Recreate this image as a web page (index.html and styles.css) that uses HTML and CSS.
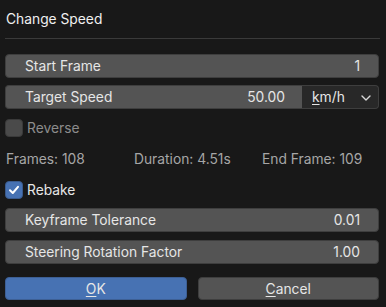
FILE: index.html
```html
<!DOCTYPE html>
<html>
<head>
<meta charset="utf-8">
<link rel="stylesheet" href="styles.css">
</head>
<body>
<div class="dialog">
  <div class="title">Change Speed</div>
  <div class="sep"></div>
  <div class="field first"><span class="label">Start Frame</span><span class="value">1</span></div>
  <div class="row">
    <div class="field joined"><span class="label">Target Speed</span><span class="value">50.00</span></div>
    <div class="dropdown"><span><u>k</u>m/h</span>
      <svg class="chev" width="10" height="6" viewBox="0 0 10 6"><path d="M1 1 L5 5 L9 1" fill="none" stroke="#d8d8d8" stroke-width="1.4" stroke-linecap="round" stroke-linejoin="round"/></svg>
    </div>
  </div>
  <div class="check disabled"><span class="box"></span><span>Reverse</span></div>
  <div class="info"><span class="i1">Frames: 108</span><span class="i2">Duration: 4.51s</span><span class="i3">End Frame: 109</span></div>
  <div class="check on"><span class="box"><svg width="14" height="14" viewBox="0 0 14 14"><path d="M3 7.2 L5.8 10 L11 3.8" fill="none" stroke="#fff" stroke-width="2" stroke-linecap="round" stroke-linejoin="round"/></svg></span><span>Rebake</span></div>
  <div class="field kf"><span class="label">Keyframe Tolerance</span><span class="value">0.01</span></div>
  <div class="field"><span class="label">Steering Rotation Factor</span><span class="value">1.00</span></div>
  <div class="buttons">
    <div class="btn ok"><u>O</u>K</div>
    <div class="btn cancel"><u>C</u>ancel</div>
  </div>
</div>
</body>
</html>
```

FILE: styles.css
```css
html, body {
  margin: 0;
  padding: 0;
  background: #181818;
}
body {
  font-family: Inter, "Noto Sans", sans-serif;
  font-size: 13.8px;
  color: #e6e6e6;
}
.dialog {
  width: 386px;
  height: 307px;
  box-sizing: border-box;
  padding: 0 7px 0 5px;
  display: flex;
  flex-direction: column;
}
.title {
  height: 38px;
  line-height: 38px;
  padding-left: 1px;
  color: #f0f0f0;
}
.sep {
  height: 1px;
  background: #3a3a3a;
  margin-right: -1px;
}
.field {
  height: 24px;
  box-sizing: border-box;
  background: #545454;
  border: 1px solid #3e3e3e;
  border-radius: 4px;
  display: flex;
  align-items: center;
  justify-content: space-between;
  padding: 0 18px 0 19px;
  margin-top: 8px;
}
.field.first {
  margin-top: 15px;
}
.field.kf {
  margin-top: 9px;
}
.row {
  display: flex;
  margin-top: 7px;
}
.row .field {
  margin-top: 0;
  flex: 1;
  border-radius: 4px 0 0 4px;
  border-right: none;
  padding-right: 17px;
}
.dropdown {
  width: 77px;
  height: 24px;
  box-sizing: border-box;
  background: #282828;
  border: 1px solid #3e3e3e;
  border-left: none;
  border-radius: 0 4px 4px 0;
  display: flex;
  align-items: center;
  justify-content: space-between;
  padding: 0 7px 0 10px;
}
.chev {
  display: block;
  margin-top: 1px;
}
u {
  text-underline-offset: 2px;
}
.check {
  display: flex;
  align-items: center;
  height: 18px;
  gap: 4px;
}
.check.disabled {
  margin-top: 10px;
  color: #8c8c8c;
}
.check.on {
  margin-top: 13px;
}
.box {
  width: 18px;
  height: 18px;
  box-sizing: border-box;
  border-radius: 4px;
  display: flex;
  align-items: center;
  justify-content: center;
}
.disabled .box {
  background: #4a4a4a;
  border: 1px solid #3a3a3a;
}
.on .box {
  background: #4772b3;
  border: 1px solid #3a5a8c;
}
.info {
  display: flex;
  height: 18px;
  align-items: center;
  margin-top: 13px;
  color: #a6a6a6;
  padding-left: 1px;
}
.i1 { width: 128px; }
.i2 { width: 128px; }
.buttons {
  display: flex;
  gap: 11px;
  margin-top: 13px;
}
.btn {
  flex: 1;
  height: 23px;
  box-sizing: border-box;
  border-radius: 4px;
  display: flex;
  align-items: center;
  justify-content: center;
  border: 1px solid #3e3e3e;
}
.ok {
  background: #4772b3;
  border-color: #3d5f94;
}
.cancel {
  background: #545454;
}
```
